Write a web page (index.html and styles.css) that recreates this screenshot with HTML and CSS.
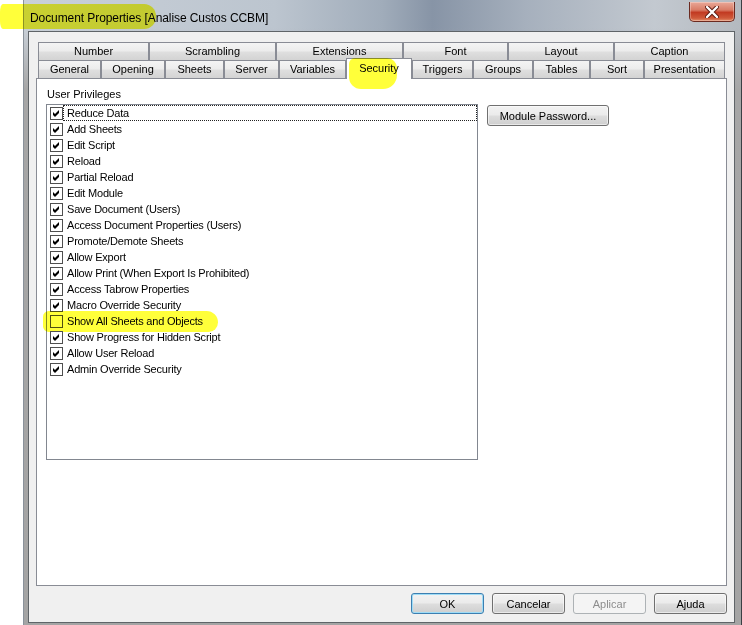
FILE: index.html
```html
<!DOCTYPE html>
<html lang="pt">
<head>
    <meta charset="UTF-8">
    <meta name="viewport" content="width=device-width, initial-scale=1.0">
    <title>Document Properties</title>
    <link rel="stylesheet" href="styles.css">
</head>
<body>

    <div class="marker marker-title"></div>

    <div class="window">
        <div class="titlebar">
            <span class="title">Document Properties [Analise Custos CCBM]</span>
            <button class="close" title="Close">
                <svg width="14" height="12" viewBox="0 0 14 12">
                    <path d="M2 1 L12 11 M12 1 L2 11" stroke="#5a1a10" stroke-width="4.2" stroke-linecap="round"/>
                    <path d="M2 1 L12 11 M12 1 L2 11" stroke="#fff" stroke-width="2.4" stroke-linecap="round"/>
                </svg>
            </button>
        </div>

        <div class="client">
            <div class="tabs">
                <div class="tab-row">
                    <div class="tab t-number">Number</div>
                    <div class="tab t-scrambling">Scrambling</div>
                    <div class="tab t-extensions">Extensions</div>
                    <div class="tab t-font">Font</div>
                    <div class="tab t-layout">Layout</div>
                    <div class="tab t-caption">Caption</div>
                </div>
                <div class="tab-row">
                    <div class="tab t-general">General</div>
                    <div class="tab t-opening">Opening</div>
                    <div class="tab t-sheets">Sheets</div>
                    <div class="tab t-server">Server</div>
                    <div class="tab t-variables">Variables</div>
                    <div class="tab t-security active">Security<span class="marker marker-tab"></span></div>
                    <div class="tab t-triggers">Triggers</div>
                    <div class="tab t-groups">Groups</div>
                    <div class="tab t-tables">Tables</div>
                    <div class="tab t-sort">Sort</div>
                    <div class="tab t-presentation">Presentation</div>
                </div>
            </div>

            <div class="panel">
                <div class="privileges">
                    <div class="group-label">User Privileges</div>
                    <div class="listbox" id="privList"></div>
                </div>
                <button class="btn btn-module">Module Password...</button>
            </div>

            <div class="actions">
                <button class="btn btn-default">OK</button>
                <button class="btn">Cancelar</button>
                <button class="btn" disabled>Aplicar</button>
                <button class="btn">Ajuda</button>
            </div>
        </div>
    </div>

    <script>
        const privileges = [
            ["Reduce Data", true],
            ["Add Sheets", true],
            ["Edit Script", true],
            ["Reload", true],
            ["Partial Reload", true],
            ["Edit Module", true],
            ["Save Document (Users)", true],
            ["Access Document Properties (Users)", true],
            ["Promote/Demote Sheets", true],
            ["Allow Export", true],
            ["Allow Print (When Export Is Prohibited)", true],
            ["Access Tabrow Properties", true],
            ["Macro Override Security", true],
            ["Show All Sheets and Objects", false],
            ["Show Progress for Hidden Script", true],
            ["Allow User Reload", true],
            ["Admin Override Security", true]
        ];

        const checkSvg = `<svg width="11" height="11" viewBox="0 0 11 11"><path d="M2 4 L4 6 L8 2 L8 5 L4 9 L2 7 Z" fill="#000"/></svg>`;

        const list = document.getElementById("privList");
        privileges.forEach(([name, checked], i) => {
            const row = `<div class="item${i === 0 ? " focus" : ""}">
                <span class="check">${checked ? checkSvg : ""}</span>
                <span class="item-label">${name}</span>
                ${checked ? "" : '<span class="marker marker-row"></span>'}
            </div>`;
            list.innerHTML += row;
        });
    </script>

</body>
</html>
```

FILE: styles.css
```css
* { box-sizing: border-box; }
body { margin: 0; width: 742px; height: 625px; overflow: hidden; position: relative; background: #fff; font-family: "Liberation Sans", Arial, sans-serif; font-size: 11px; color: #000; }

/* window frame */
.window { margin-left: 23px; width: 719px; height: 625px; padding: 0 6px 2px 4px; border-left: 1px solid #8a929b; border-right: 1px solid #3b3f44;
    background: linear-gradient(180deg, rgba(164,164,164,0) 0, rgba(164,164,164,0) 28px, #a6a6a6 90px, #a4a4a4 100%),
                linear-gradient(90deg, #c9d0d8 0%, #bcc5cf 35%, #a0acba 50%, #8794a6 57%, #a6b0bd 70%, #c3c9d0 88%, #b4b9bf 100%); }
.titlebar { height: 31px; display: flex; align-items: flex-start; justify-content: space-between; }
.title { font-size: 12px; line-height: 14px; margin: 11px 0 0 2px; letter-spacing: -0.08px; }
.close { width: 46px; height: 20px; margin-top: 2px; padding: 0; display: flex; align-items: center; justify-content: center; border: 1px solid #6b2a20; border-top: none; border-radius: 0 0 5px 5px;
    background: linear-gradient(180deg, #e9a898 0%, #d97c66 42%, #c23a22 55%, #cf5a3a 85%, #e4906c 100%); box-shadow: inset 0 0 0 1px rgba(255,255,255,0.3); }

/* client area */
.client { height: 592px; border: 1px solid #5f6468; background: #f0f0f0; padding: 10px 7px 0; }

.tabs { margin: 0 2px; }
.tab-row { display: flex; height: 18px; }
.tab { height: 18px; border: 1px solid #898c95; border-bottom: none; text-align: center; line-height: 17px; white-space: nowrap;
    background: linear-gradient(180deg, #f4f4f4 0%, #ececec 48%, #dfdfdf 52%, #d3d3d3 100%); }
.tab.active { position: relative; z-index: 1; height: 21px; margin-top: -2px; background: #fff; line-height: 19px; }

.t-number { width: 111px; }
.t-scrambling { width: 127px; }
.t-extensions { width: 127px; }
.t-font { width: 105px; }
.t-layout { width: 106px; }
.t-caption { width: 111px; }
.t-general { width: 63px; }
.t-opening { width: 64px; }
.t-sheets { width: 59px; }
.t-server { width: 55px; }
.t-variables { width: 67px; }
.t-security { width: 66px; }
.t-triggers { width: 61px; }
.t-groups { width: 60px; }
.t-tables { width: 57px; }
.t-sort { width: 54px; }
.t-presentation { width: 81px; }

.panel { height: 508px; border: 1px solid #898c95; background: #fff; padding: 8px 0 0 9px; display: flex; align-items: flex-start; }
.privileges { width: 432px; }
.group-label { line-height: 14px; padding-left: 1px; margin-bottom: 3px; }
.listbox { height: 356px; border: 1px solid #828790; background: #fff; }

.item { position: relative; display: flex; align-items: center; height: 16px; padding-left: 3px; }
.check { flex: none; width: 13px; height: 13px; border: 1px solid #4f4f4f; background: #fff; display: flex; }
.item-label { flex: 1; height: 16px; padding-left: 3px; border: 1px dotted transparent; line-height: 14px; letter-spacing: -0.2px; white-space: nowrap; }
.item.focus .item-label { border-color: #222; }

/* buttons */
.btn { font: inherit; color: #000; height: 21px; padding: 0; border: 1px solid #707070; border-radius: 3px;
    background: linear-gradient(180deg, #f2f2f2 0%, #ebebeb 48%, #dddddd 52%, #cfcfcf 100%); box-shadow: inset 0 0 0 1px rgba(255,255,255,0.55); }
.btn-module { width: 122px; margin: 18px 0 0 9px; }
.btn-default { border-color: #3c7fb1; box-shadow: inset 0 0 0 1px #9fdcf6; }
.btn:disabled { color: #8d8d8d; border-color: #adb2b5; background: #f4f4f4; box-shadow: none; }

.actions { display: flex; justify-content: flex-end; gap: 8px; margin-top: 7px; }
.actions .btn { width: 73px; }

/* highlighter strokes */
.marker { position: absolute; background: #ffff3a; mix-blend-mode: multiply; pointer-events: none; }
.marker-title { left: 0; top: 4px; width: 156px; height: 25px; z-index: 5; border-radius: 3px 12px 12px 3px / 8px 12px 12px 8px; }
.marker-tab { left: 2px; top: -1px; width: 48px; height: 31px; border-radius: 6px 10px 14px 12px; }
.marker-row { left: -4px; top: -2px; width: 175px; height: 21px; border-radius: 6px 12px 10px 6px; }
```
